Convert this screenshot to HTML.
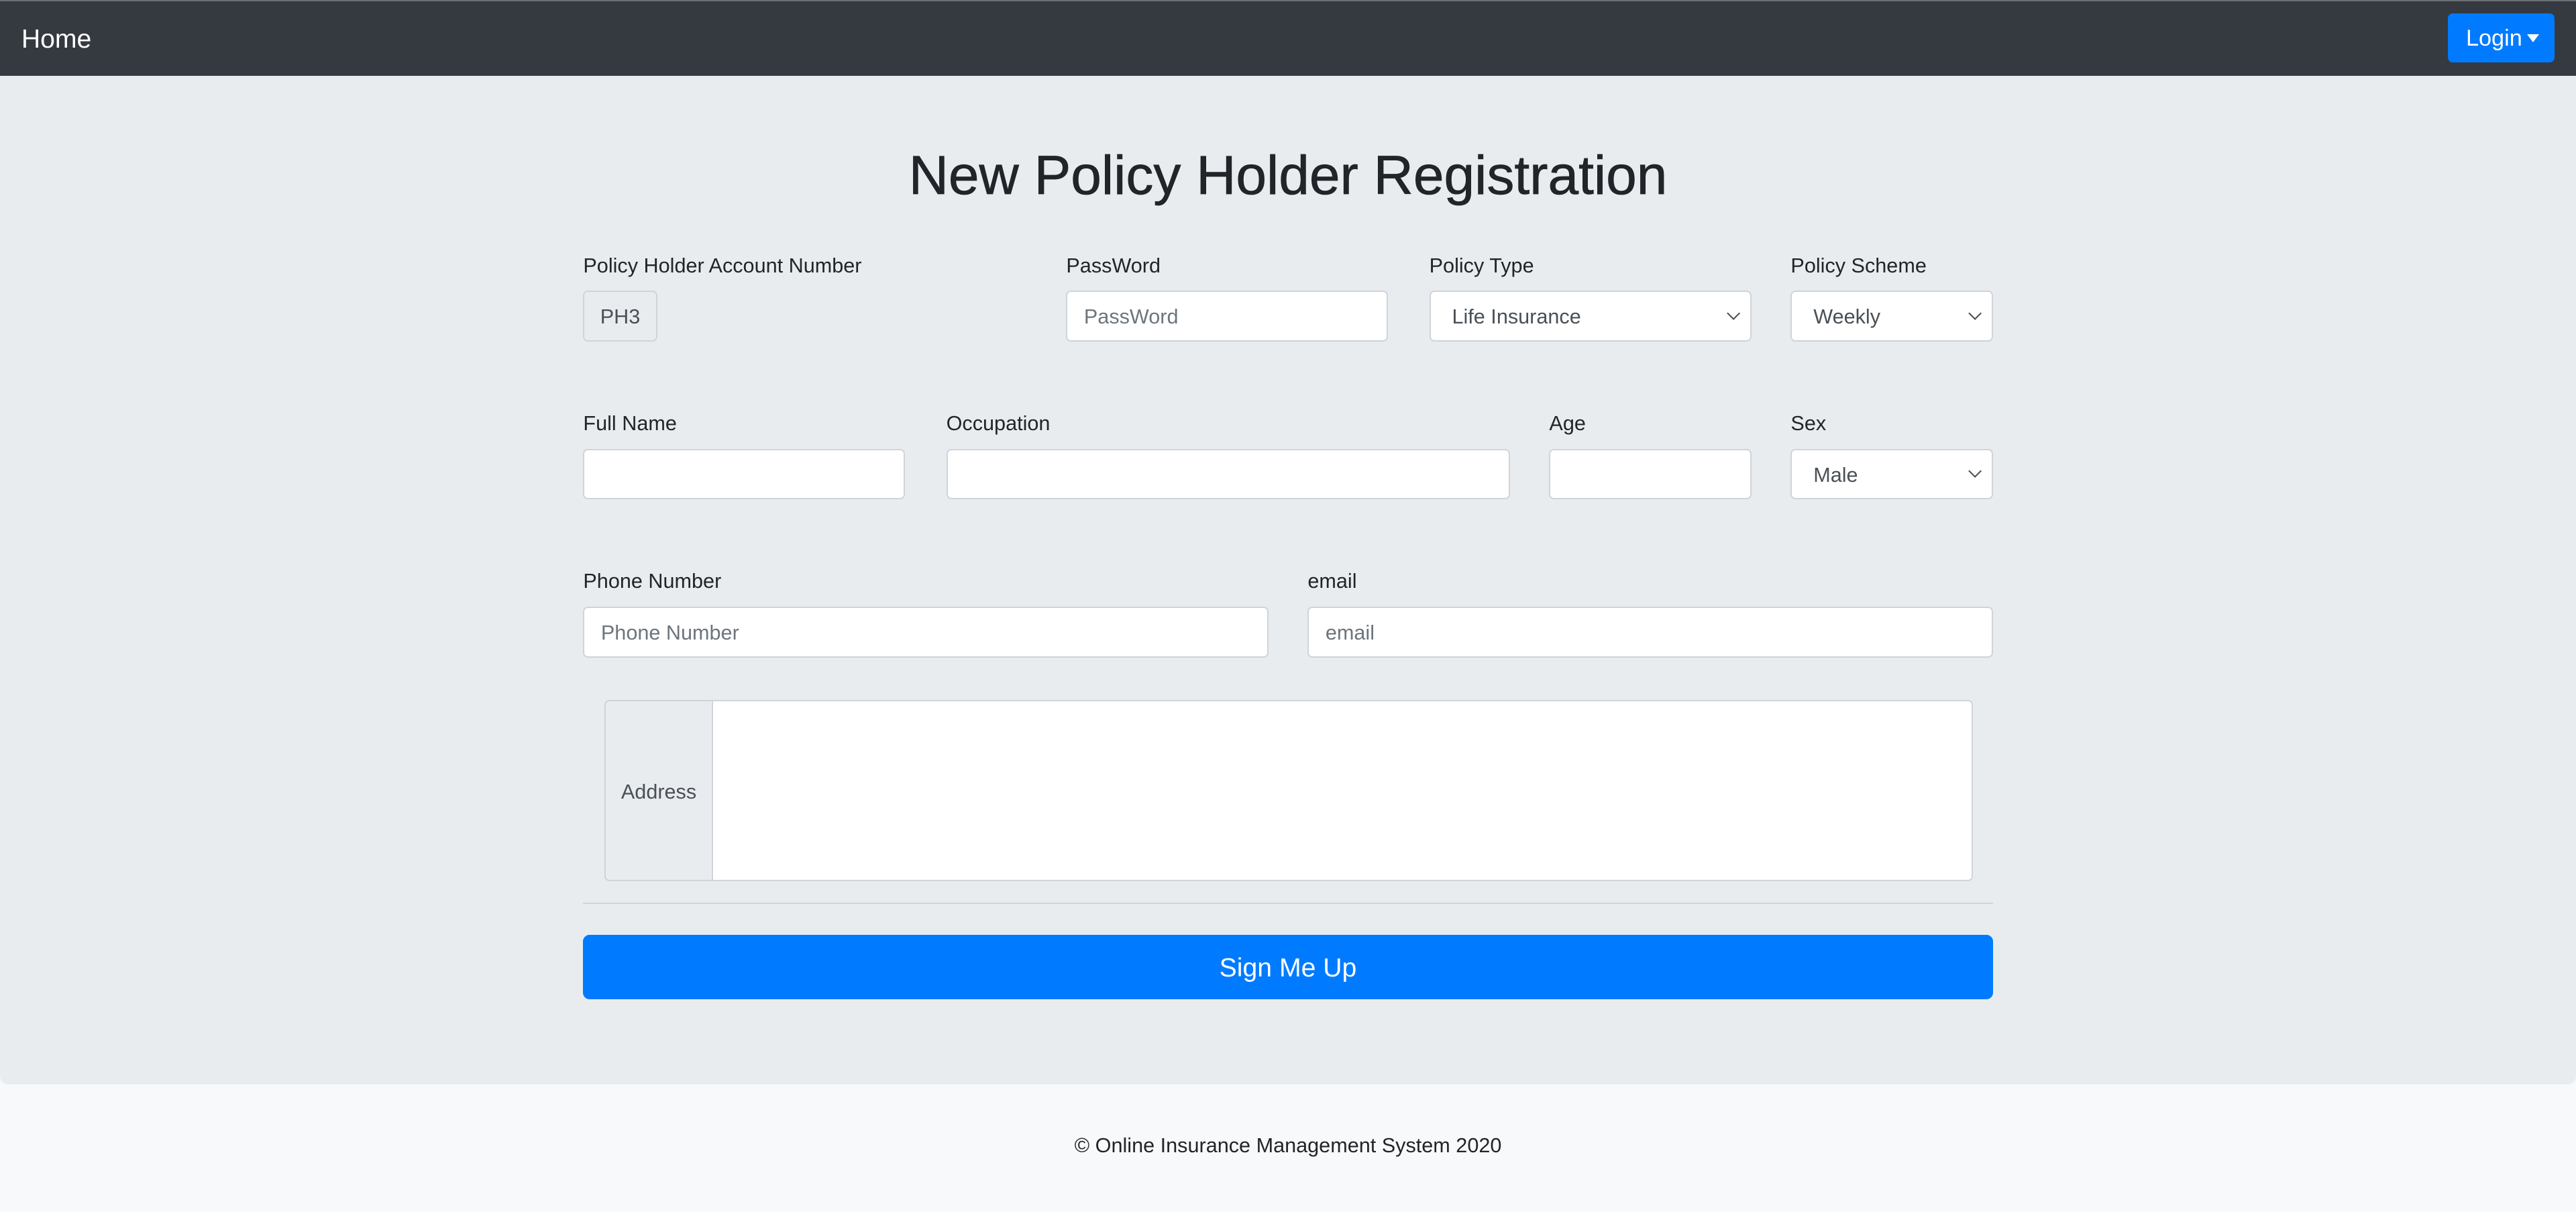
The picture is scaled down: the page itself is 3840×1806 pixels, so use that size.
<!DOCTYPE html>
<html><head><meta charset="utf-8"><style>
html,body{margin:0;padding:0}
body{width:1568px;height:737.5px;zoom:2.449;position:relative;overflow:hidden;background:#f8f9fa;font-family:"Liberation Sans",sans-serif;color:#212529;font-size:12.5px}
.a{position:absolute}
.nav{left:0;top:0;width:1568px;height:46px;background:#343a40;border-top:1px solid #6c6f73;box-sizing:border-box}
.home{left:13px;top:15px;color:#fff;font-size:16px}
.login{left:1490px;top:8px;width:65px;height:30px;background:#007bff;border-radius:3px;color:#fff;font-size:14px;line-height:31px;text-indent:11px}
.login:after{content:"";position:absolute;left:48px;top:13px;border:4px solid transparent;border-top:5px solid #fff;border-bottom:0}
.main{left:0;top:46px;width:1568px;height:614px;background:#e9ecef;border-radius:0 0 5px 5px}
h1{position:absolute;left:0;width:1568px;top:87px;margin:0;text-align:center;font-size:33.5px;font-weight:500;line-height:40px;-webkit-text-stroke:0.3px #212529}
.lbl{font-size:12.5px;line-height:16px}
.in{background:#fff;border:1px solid #ced4da;border-radius:3px;box-sizing:border-box;height:31px;font-size:12.5px;line-height:31px;text-indent:10px;color:#6c757d}
.sel{color:#495057;text-indent:13px}
.sel:after{content:"";position:absolute;right:7px;top:10px;width:5px;height:5px;border-right:1px solid #495057;border-bottom:1px solid #495057;transform:rotate(45deg)}
.ro{background:#e9ecef;color:#495057}
</style></head><body>
<div class="a nav"></div>
<div class="a home">Home</div>
<div class="a login">Login</div>
<div class="a main"></div>
<h1>New Policy Holder Registration</h1>

<div class="a lbl" style="left:355px;top:154px">Policy Holder Account Number</div>
<div class="a lbl" style="left:649px;top:154px">PassWord</div>
<div class="a lbl" style="left:870px;top:154px">Policy Type</div>
<div class="a lbl" style="left:1090px;top:154px">Policy Scheme</div>
<div class="a in ro" style="left:355px;top:177px;width:45px;text-indent:0;text-align:center">PH3</div>
<div class="a in" style="left:649px;top:177px;width:196px">PassWord</div>
<div class="a in sel" style="left:870px;top:177px;width:196px">Life Insurance</div>
<div class="a in sel" style="left:1090px;top:177px;width:123px">Weekly</div>

<div class="a lbl" style="left:355px;top:250px">Full Name</div>
<div class="a lbl" style="left:576px;top:250px">Occupation</div>
<div class="a lbl" style="left:943px;top:250px">Age</div>
<div class="a lbl" style="left:1090px;top:250px">Sex</div>
<div class="a in" style="left:355px;top:273px;width:196px"></div>
<div class="a in" style="left:576px;top:273px;width:343px"></div>
<div class="a in" style="left:943px;top:273px;width:123px"></div>
<div class="a in sel" style="left:1090px;top:273px;width:123px">Male</div>

<div class="a lbl" style="left:355px;top:346px">Phone Number</div>
<div class="a lbl" style="left:796px;top:346px">email</div>
<div class="a in" style="left:355px;top:369px;width:417px">Phone Number</div>
<div class="a in" style="left:796px;top:369px;width:417px">email</div>

<div class="a in" style="left:368px;top:426px;width:833px;height:110px"></div>
<div class="a" style="left:368px;top:426px;width:66px;height:110px;background:#e9ecef;border:1px solid #ced4da;border-radius:3px 0 0 3px;box-sizing:border-box;text-align:center;line-height:111px;color:#495057">Address</div>

<div class="a" style="left:355px;top:549px;width:858px;height:1px;background:#d3d6d9"></div>
<div class="a" style="left:355px;top:569px;width:858px;height:39px;background:#007bff;border-radius:4px;color:#fff;text-align:center;line-height:41px;font-size:16px">Sign Me Up</div>

<div class="a" style="left:0;top:690px;width:1568px;text-align:center;font-size:12.5px">© Online Insurance Management System 2020</div>
</body></html>
